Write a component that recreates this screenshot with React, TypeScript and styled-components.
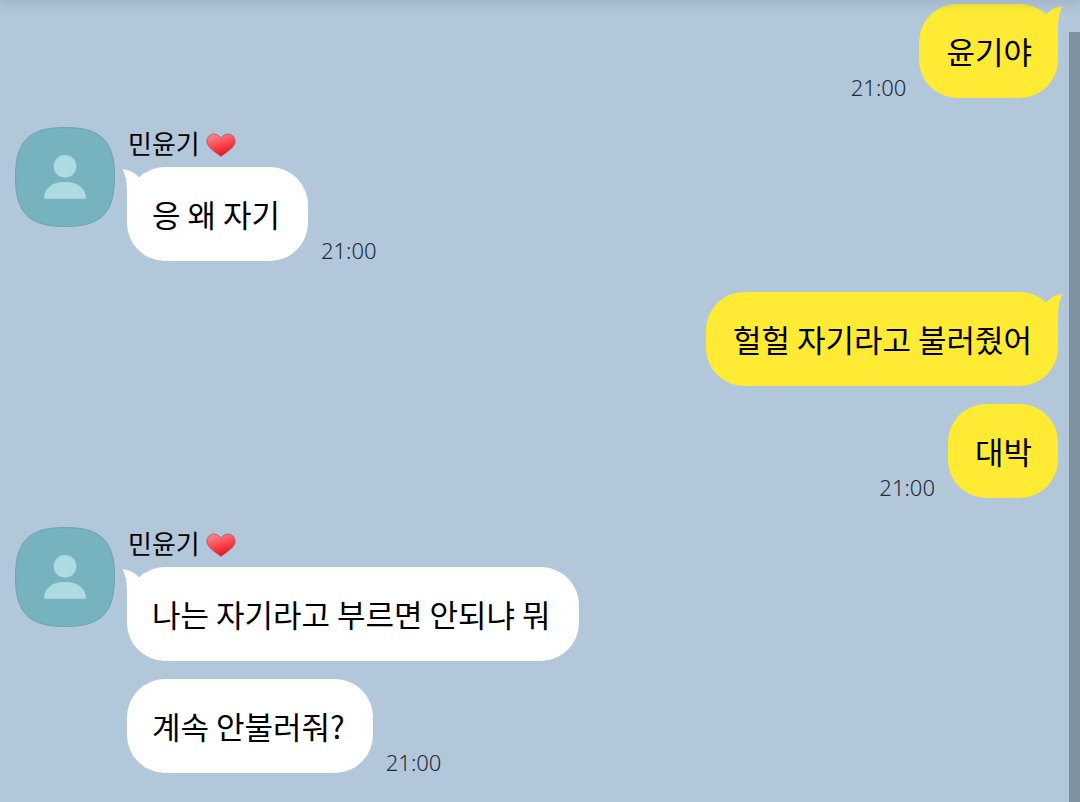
import React from "react";
import styled, { createGlobalStyle } from "styled-components";

const GlobalStyle = createGlobalStyle`
  * { box-sizing: border-box; }
  body {
    margin: 0;
    background: #b2c7da;
    font-family: "Noto Sans CJK KR", "Noto Sans", sans-serif;
    color: #000;
  }
`;

const Page = styled.div`
  display: flex;
  flex-direction: column;
  min-height: 100vh;
  background: #b2c7da;
`;

const TopEdge = styled.header`
  position: relative;
  z-index: 1;
  flex: none;
  height: 3px;
  background: #a7bacd;
  box-shadow: 0 1px 10px rgba(40, 60, 80, 0.28);
`;

const Body = styled.div`
  display: flex;
  flex: 1;
`;

const Conversation = styled.main`
  display: flex;
  flex: 1;
  flex-direction: column;
  gap: 29px;
  min-width: 0;
  padding: 0 11px 29px 15px;
`;

const ScrollThumb = styled.div`
  flex: none;
  width: 11px;
  margin-top: 29px;
  background: #7f909e;
`;

const SentGroup = styled.section`
  display: flex;
  flex-direction: column;
  align-items: flex-end;
  gap: 18px;
  padding-top: 1px;

  & ~ & {
    padding-top: 2px;
  }
`;

const ReceivedGroup = styled.section`
  display: flex;
  align-items: flex-start;
  gap: 12px;
`;

const ReceivedColumn = styled.div`
  display: flex;
  flex-direction: column;
  align-items: flex-start;
  gap: 18px;
  min-width: 0;
`;

const Sender = styled.h2`
  display: flex;
  align-items: flex-start;
  gap: 6px;
  height: 34px;
  margin: 0 0 -12px;
  padding-left: 1px;
  font-size: 26px;
  font-weight: 400;
  line-height: 32px;
`;

const MessageRow = styled.div<{ $sent?: boolean }>`
  display: flex;
  flex-direction: ${(p) => (p.$sent ? "row-reverse" : "row")};
  align-items: flex-end;
  gap: 13px;
`;

const Bubble = styled.p<{ $sent?: boolean }>`
  position: relative;
  margin: 0;
  padding: ${(p) => (p.$sent ? "24px 26px 24px 27px" : "24px 28px 24px 25px")};
  border-radius: 38px;
  background: ${(p) => (p.$sent ? "#ffea34" : "#fff")};
  font-size: 31px;
  line-height: 46px;
`;

const TailSvg = styled.svg<{ $sent?: boolean }>`
  position: absolute;
  top: 0;
  ${(p) => (p.$sent ? "right: -5px; transform: scaleX(-1);" : "left: -5px;")}
  width: 24px;
  height: 40px;
  fill: ${(p) => (p.$sent ? "#ffea34" : "#fff")};
`;

const Time = styled.time`
  flex: none;
  padding-bottom: 1px;
  color: #1f2b36;
  font-family: "Noto Sans", "Noto Sans CJK KR", sans-serif;
  font-size: 22px;
  font-weight: 300;
  line-height: 20px;
`;

const AvatarSvg = styled.svg`
  flex: none;
  width: 100px;
  height: 100px;
`;

const HeartSvg = styled.svg`
  width: 30px;
  height: 24px;
  margin-top: 6px;
`;

function Tail({ sent }: { sent?: boolean }) {
  return (
    <TailSvg $sent={sent} viewBox="0 0 24 40" aria-hidden="true">
      <path d="M0.3 2.3C6 2.2 11 5 16.4 9.8L24 20L5 38V25C5 15 3.5 8 0.3 2.3Z" />
    </TailSvg>
  );
}

function Avatar() {
  return (
    <AvatarSvg viewBox="0 0 100 100" role="img" aria-label="프로필">
      <path
        d="M50 .5C86 .5 99.5 14 99.5 50S86 99.5 50 99.5S.5 86 .5 50S14 .5 50 .5Z"
        fill="#76b3bf"
        stroke="#68a2b0"
      />
      <circle cx="50" cy="39.3" r="11.3" fill="#aedbe1" />
      <path d="M29 71.7C29 60.5 38 55 50 55S71 60.5 71 71.7Z" fill="#aedbe1" />
    </AvatarSvg>
  );
}

function Heart() {
  return (
    <HeartSvg viewBox="0 0 30 24" role="img" aria-label="하트">
      <defs>
        <linearGradient id="heartFill" x1="0.2" y1="0" x2="0.6" y2="1">
          <stop offset="0" stopColor="#f58a8d" />
          <stop offset="0.45" stopColor="#fb4f58" />
          <stop offset="1" stopColor="#ee0c1a" />
        </linearGradient>
      </defs>
      <path
        d="M15 5.4C13 1.8 9.5 .7 6.5 1.2C2.5 2 .6 5.5 1 9.3C1.7 14.5 9 19 15 23.3C21 19 28.3 14.5 29 9.3C29.4 5.5 27.5 2 23.5 1.2C20.5 .7 17 1.8 15 5.4Z"
        fill="url(#heartFill)"
        stroke="#a84b58"
        strokeWidth="0.7"
      />
    </HeartSvg>
  );
}

type MessageData = { text: string; time?: string };
type GroupData = { sender?: string; messages: MessageData[] };

const groups: GroupData[] = [
  { messages: [{ text: "윤기야", time: "21:00" }] },
  { sender: "민윤기", messages: [{ text: "응 왜 자기", time: "21:00" }] },
  { messages: [{ text: "헐헐 자기라고 불러줬어" }, { text: "대박", time: "21:00" }] },
  {
    sender: "민윤기",
    messages: [{ text: "나는 자기라고 부르면 안되냐 뭐" }, { text: "계속 안불러줘?", time: "21:00" }],
  },
];

function Messages({ items, sent }: { items: MessageData[]; sent?: boolean }) {
  return (
    <>
      {items.map((m, i) => (
        <MessageRow key={m.text} $sent={sent}>
          <Bubble $sent={sent}>
            {i === 0 && <Tail sent={sent} />}
            {m.text}
          </Bubble>
          {m.time && <Time>{m.time}</Time>}
        </MessageRow>
      ))}
    </>
  );
}

export default function App() {
  return (
    <Page>
      <GlobalStyle />
      <TopEdge />
      <Body>
        <Conversation>
          {groups.map((g, i) =>
            g.sender ? (
              <ReceivedGroup key={i}>
                <Avatar />
                <ReceivedColumn>
                  <Sender>
                    {g.sender}
                    <Heart />
                  </Sender>
                  <Messages items={g.messages} />
                </ReceivedColumn>
              </ReceivedGroup>
            ) : (
              <SentGroup key={i}>
                <Messages items={g.messages} sent />
              </SentGroup>
            )
          )}
        </Conversation>
        <ScrollThumb />
      </Body>
    </Page>
  );
}
